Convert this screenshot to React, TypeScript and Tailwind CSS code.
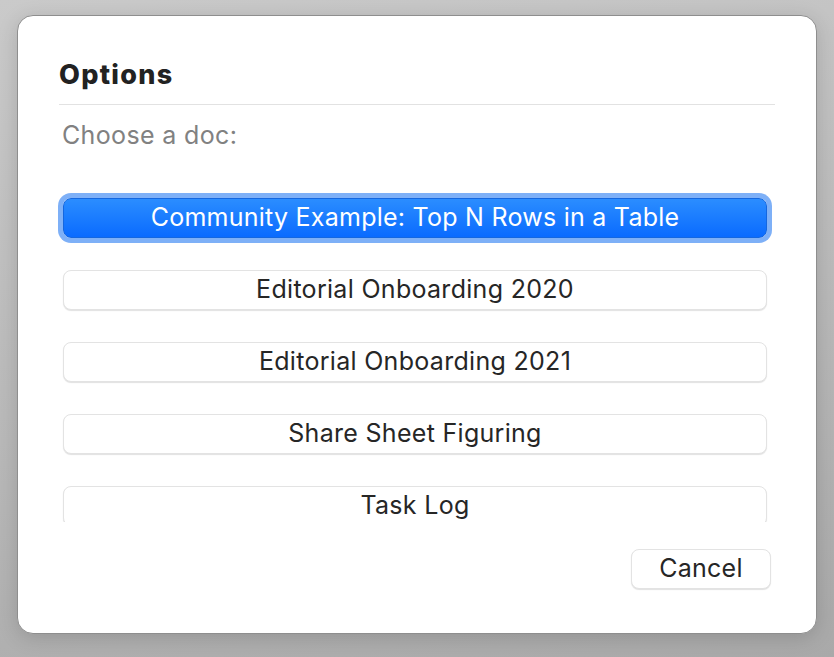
import React from "react";

const items = [
  "Community Example: Top N Rows in a Table",
  "Editorial Onboarding 2020",
  "Editorial Onboarding 2021",
  "Share Sheet Figuring",
  "Task Log",
];

export default function App() {
  return (
    <div
      className="w-[834px] h-[657px] overflow-hidden bg-[linear-gradient(170deg,#cacaca_0%,#b9b9b9_55%,#a9a9a9_100%)] pt-[15px] pl-[17px]"
      style={{ fontFamily: "Inter, 'Noto Sans', sans-serif" }}
    >
      <div className="w-[800px] h-[619px] rounded-[16px] border border-[#8e8e8e] bg-white shadow-[0_4px_20px_rgba(0,0,0,0.15)] pl-[41px] pr-[41px] pt-[44px] flex flex-col">
        <div className="text-[27px] leading-[30px] font-extrabold tracking-[1.3px] text-[#222222]">Options</div>
        <div className="mt-[14px] h-px bg-[#e2e2e2]" />
        <div className="mt-[15px] ml-[3px] text-[25px] leading-[30px] tracking-[0.35px] text-[#818181]">Choose a doc:</div>
        <div className="mt-[42px] -ml-[2px] w-[716px] h-[330px] overflow-hidden p-[6px] flex flex-col gap-[32px]">
          {items.map((t, i) =>
            i === 0 ? (
              <div
                key={t}
                className="shrink-0 h-[40px] rounded-[8px] bg-[linear-gradient(180deg,#2b8dff,#0a6bff)] border border-[#1467e0] ring-[5px] ring-[#7eb0f7] flex items-center justify-center text-white text-[25px] leading-[30px] tracking-[0.25px] pb-[2px]"
              >
                {t}
              </div>
            ) : (
              <div
                key={t}
                className="shrink-0 h-[40px] rounded-[8px] bg-white border border-[#e3e3e3] shadow-[0_1px_1px_rgba(0,0,0,0.12)] flex items-center justify-center text-[#262626] text-[25px] leading-[30px] tracking-[0.3px] pb-[2px]"
              >
                {t}
              </div>
            )
          )}
        </div>
        <div className="mt-[27px] flex justify-end pr-[4px]">
          <div className="w-[140px] h-[40px] rounded-[8px] bg-white border border-[#e3e3e3] shadow-[0_1px_1px_rgba(0,0,0,0.12)] flex items-center justify-center text-[#262626] text-[25px] leading-[30px] tracking-[0.25px] pb-[2px]">
            Cancel
          </div>
        </div>
      </div>
    </div>
  );
}
